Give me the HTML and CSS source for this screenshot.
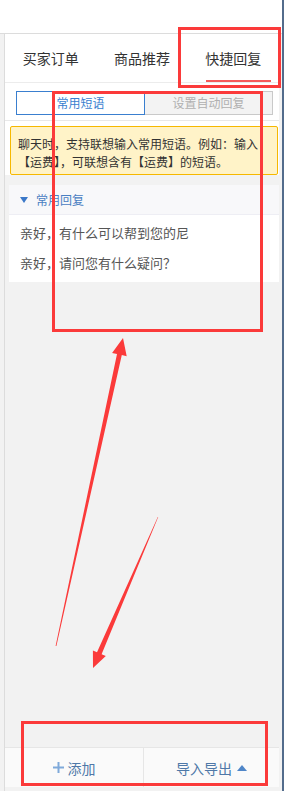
FILE: index.html
```html
<!DOCTYPE html>
<html lang="zh">
<head>
<meta charset="utf-8">
<link rel="stylesheet" href="styles.css">
</head>
<body>
<div class="topbar"></div>
<div class="main">
  <div class="gutter"></div>
  <div class="panel">
    <div class="tabs">
      <div class="tab">买家订单</div>
      <div class="tab">商品推荐</div>
      <div class="tab active">快捷回复<span class="bar"></span></div>
    </div>
    <div class="segwrap">
      <div class="seg">
        <div class="seg-item on">常用短语</div>
        <div class="seg-item">设置自动回复</div>
      </div>
    </div>
    <div class="noticewrap">
      <div class="notice">聊天时，支持联想输入常用短语。例如：输入<br>【运费】，可联想含有【运费】的短语。</div>
    </div>
    <div class="group">
      <div class="group-head"><span class="caret"></span><span>常用回复</span></div>
      <div class="list">
        <div class="item">亲好，有什么可以帮到您的尼</div>
        <div class="item">亲好，请问您有什么疑问？</div>
      </div>
    </div>
    <div class="spacer"></div>
    <div class="footer">
      <div class="fbtn add"><svg class="plus" width="11" height="11" viewBox="0 0 11 11"><path d="M5.5 0v11M0 5.5h11" stroke="#7fa9da" stroke-width="2"/></svg><span>添加</span></div>
      <div class="fbtn io"><span>导入导出</span><span class="up"></span></div>
    </div>
  </div>
</div>
<svg class="marks" width="284" height="791" viewBox="0 0 284 791">
  <g fill="none" stroke="#fb3a3a" stroke-width="3">
    <rect x="179.5" y="28.5" width="100" height="58"/>
    <rect x="53.5" y="92.5" width="208" height="238"/>
    <rect x="22.5" y="722.5" width="244" height="62"/>
  </g>
  <g fill="#fb3a3a">
    <polygon points="55.6,645.9 117.0,354.1 112.1,353.0 123,338 126.7,356.2 121.8,355.1 56.4,646.1"/>
    <polygon points="157.8,516.9 97.0,652.3 92.9,650.5 93,668 105.8,656.1 101.6,654.3 158.2,517.1"/>
  </g>
</svg>
</body>
</html>
```
FILE: styles.css
```css
* { box-sizing: border-box; }
html, body { margin: 0; padding: 0; }
body {
  width: 284px;
  height: 791px;
  background: #f2f2f2;
  border-right: 2px solid #536c8c;
  font-family: "Noto Sans CJK SC", "Noto Sans", sans-serif;
  position: relative;
  overflow: hidden;
}
.topbar {
  height: 34px;
  background: #fff;
  border-bottom: 1px solid #dcdcdc;
}
.main {
  display: flex;
  height: 757px;
}
.gutter { width: 4px; background: #f2f2f2; }
.panel {
  width: 276px;
  border-left: 1px solid #dcdcdc;
  display: flex;
  flex-direction: column;
  padding-right: 1px;
  padding-bottom: 4px;
}
.tabs {
  display: flex;
  height: 49px;
  background: #fff;
  border-bottom: 1px solid #ececec;
}
.tab {
  flex: 1;
  text-align: center;
  font-size: 14px;
  line-height: 48px;
  color: #333;
  position: relative;
}
.tab .bar {
  position: absolute;
  left: 18px;
  bottom: 0;
  width: 65px;
  height: 2px;
  background: #f55a5a;
}
.segwrap {
  background: #fff;
  padding: 8px 6px 5px 11px;
  border-bottom: 1px solid #e8e8e8;
}
.seg {
  display: flex;
  height: 24px;
}
.seg-item {
  flex: 1;
  font-size: 12px;
  line-height: 22px;
  text-align: center;
  color: #b0b0b0;
  background: #f3f3f3;
  border: 1px solid #c9c9c9;
  border-left: none;
}
.seg-item.on {
  background: #fff;
  color: #3a7fcf;
  border: 1px solid #3a7fcf;
}
.noticewrap {
  background: #fff;
  padding: 5px 1px 0 5px;
}
.notice {
  background: #fff3c8;
  border: 1px solid #f6b800;
  border-radius: 2px;
  padding: 8px 7px 3px;
  font-size: 12px;
  line-height: 18px;
  color: #333;
  white-space: nowrap;
}
.group {
  margin-top: 10px;
  margin-left: 4px;
  background: #fff;
}
.group-head {
  height: 30px;
  background: #f8f8fa;
  border-bottom: 1px solid #eeeef4;
  display: flex;
  align-items: center;
  padding-left: 11px;
  font-size: 12px;
  color: #4a80c2;
}
.caret {
  width: 0;
  height: 0;
  border-left: 4px solid transparent;
  border-right: 4px solid transparent;
  border-top: 6px solid #3b78c8;
  margin-right: 8px;
  margin-top: 1px;
}
.list { padding: 3px 0 4px; }
.item {
  height: 30px;
  line-height: 30px;
  padding-left: 11px;
  font-size: 13px;
  color: #555;
}
.spacer { flex: 1; }
.footer {
  display: flex;
  height: 40px;
  border-top: 1px solid #e6e6e6;
  background: #fafafa;
}
.fbtn {
  flex: 1;
  display: flex;
  align-items: center;
  justify-content: center;
  font-size: 14px;
  color: #4e78a8;
}
.fbtn.add { border-right: 1px solid #e6e6e6; flex: 0 0 139px; }
.plus { margin-right: 4px; }
.up {
  width: 0;
  height: 0;
  border-left: 5px solid transparent;
  border-right: 5px solid transparent;
  border-bottom: 6px solid #4f86c8;
  margin-left: 5px;
}
.marks {
  position: absolute;
  left: 0;
  top: 0;
  pointer-events: none;
}
```
